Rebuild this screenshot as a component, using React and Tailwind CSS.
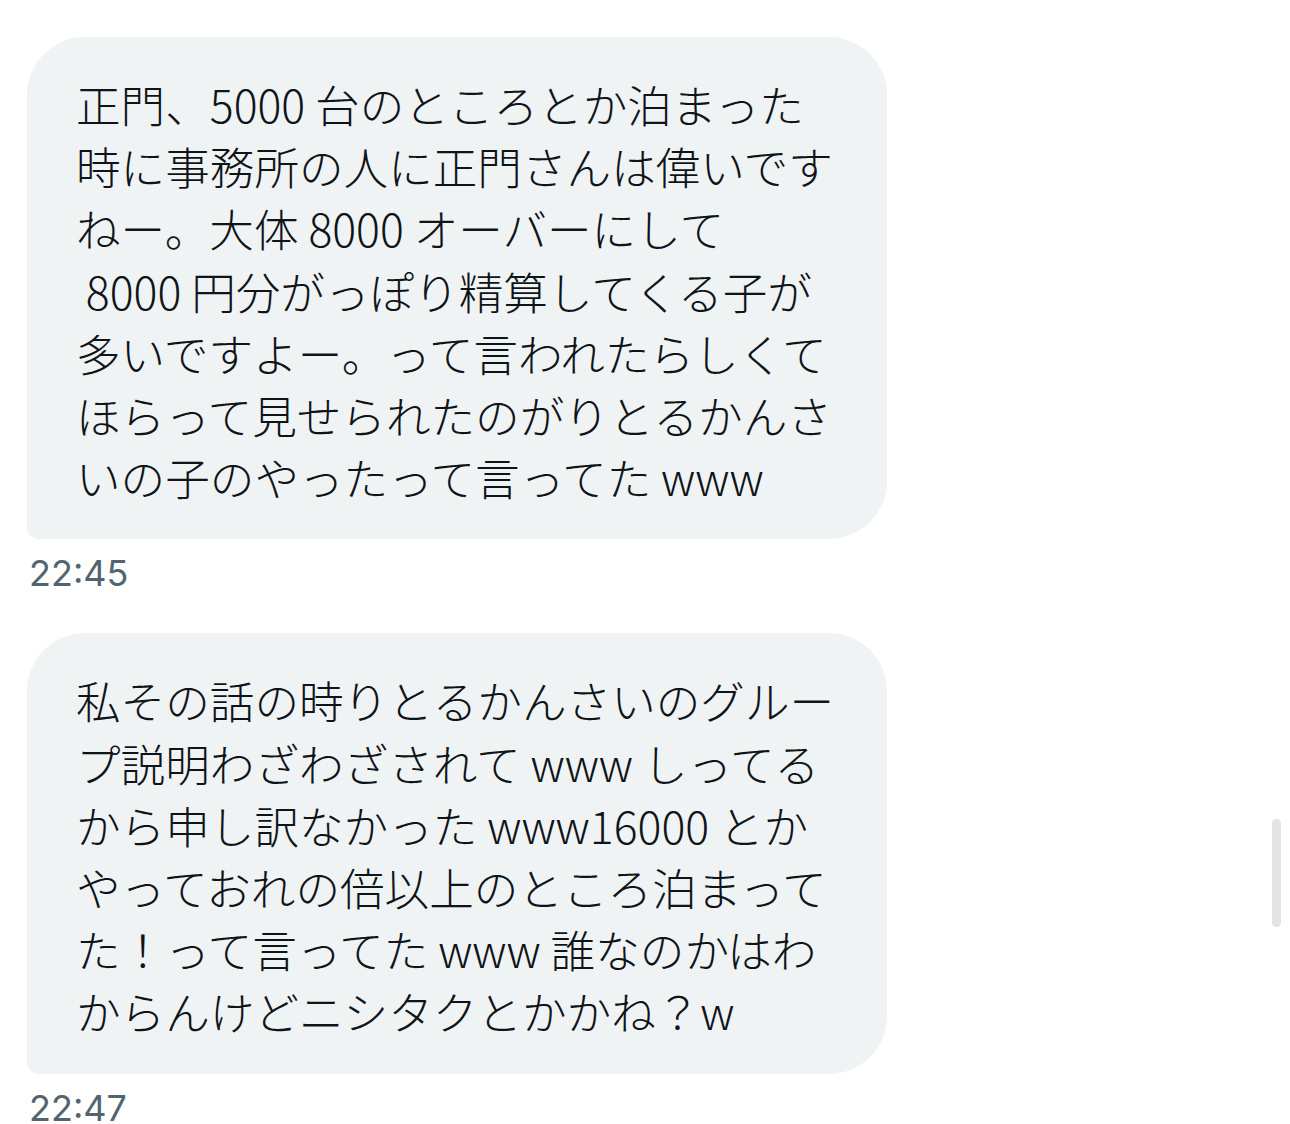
import React from 'react';

const messages = [
  {
    lines: [
      '正門、5000 台のところとか泊まった',
      '時に事務所の人に正門さんは偉いです',
      'ねー。大体 8000 オーバーにして',
      ' 8000 円分がっぽり精算してくる子が',
      '多いですよー。って言われたらしくて',
      'ほらって見せられたのがりとるかんさ',
      'いの子のやったって言ってた www',
    ],
    time: '22:45',
  },
  {
    lines: [
      '私その話の時りとるかんさいのグルー',
      'プ説明わざわざされて www しってる',
      'から申し訳なかった www16000 とか',
      'やっておれの倍以上のところ泊まって',
      'た！って言ってた www 誰なのかはわ',
      'からんけどニシタクとかかね？w',
    ],
    time: '22:47',
  },
];

function Bubble({ lines, time }) {
  return (
    <div className="flex flex-col items-start">
      <div className="w-[860px] bg-[#eff3f4] rounded-tl-[58px] rounded-tr-[58px] rounded-br-[58px] rounded-bl-[12px] pl-[49px] pr-[30px] pt-[36px] pb-[31px]">
        {lines.map((line, i) => (
          <div
            key={i}
            className="text-[44.6px] leading-[62.2px] font-light text-[#0f1419] whitespace-pre"
            style={{ fontFamily: '"Noto Sans CJK JP", "Noto Sans", sans-serif' }}
          >
            {line}
          </div>
        ))}
      </div>
      <div className="pl-[2px] pt-[14px] text-[36px] leading-[40px] text-[#536471] font-['Inter',sans-serif]">
        {time}
      </div>
    </div>
  );
}

export default function App() {
  return (
    <div className="relative w-[1290px] h-[1124px] overflow-hidden bg-white">
      <div className="flex flex-col gap-[40px] pl-[27px] pt-[37px]">
        {messages.map((m, i) => (
          <Bubble key={i} lines={m.lines} time={m.time} />
        ))}
      </div>
      {/* scroll indicator */}
      <div className="absolute left-[1272px] top-[819px] w-[9px] h-[108px] rounded-full bg-[#e3e3e3]" />
    </div>
  );
}
